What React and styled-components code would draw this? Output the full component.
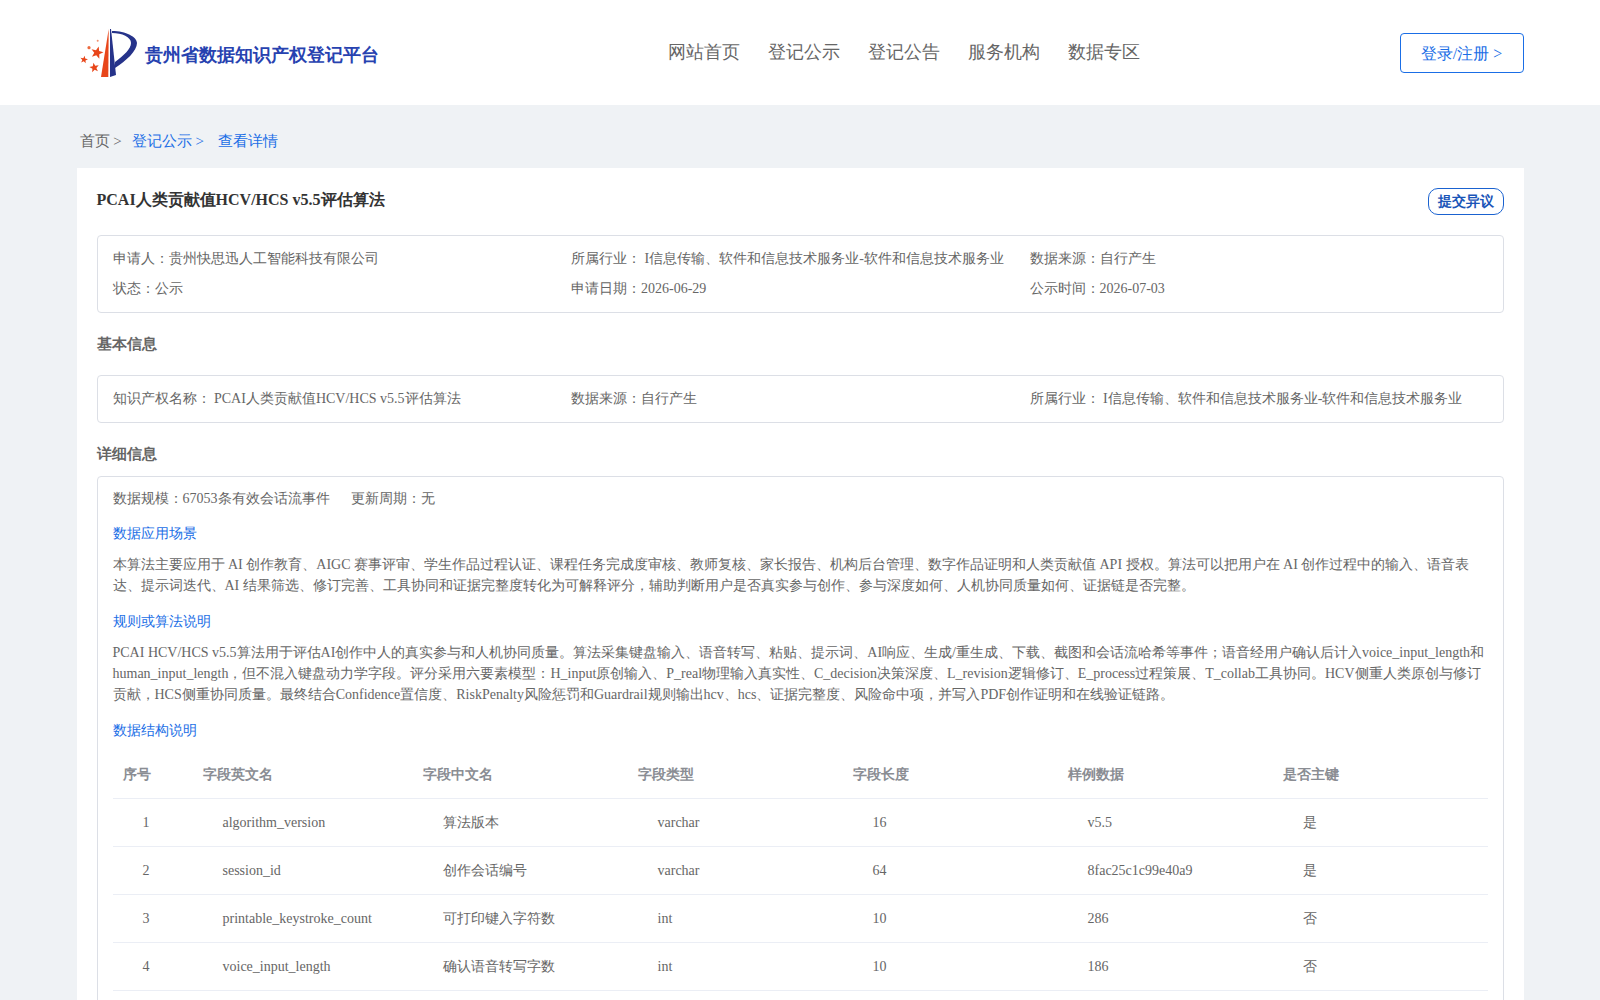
import React from 'react';
import styled, { createGlobalStyle } from 'styled-components';

const GlobalStyle = createGlobalStyle`
  html, body {
    margin: 0;
    padding: 0;
    background: #eff2f5;
    font-family: "Liberation Serif", serif;
    color: #666;
  }
  html { overflow: hidden; height: 1000px; }
  * { box-sizing: border-box; }
`;

const Header = styled.header`
  height: 105px;
  background: #fff;
  padding: 0 76px 0 80px;
  display: grid;
  grid-template-columns: 588px auto 1fr;
  align-items: center;
`;

const Brand = styled.div`
  display: flex;
  align-items: center;
  gap: 7px;
  padding-top: 3px;
`;

const BrandName = styled.span`
  padding-top: 2px;
  font-size: 18px;
  font-weight: 700;
  color: #2742b0;
`;

const Nav = styled.nav`
  display: flex;
  gap: 28px;
  padding-bottom: 2px;
`;

const NavLink = styled.a`
  font-size: 18px;
  color: #666;
  line-height: 24px;
`;

const LoginButton = styled.button`
  justify-self: end;
  width: 124px;
  height: 40px;
  padding: 3px 1px 0 0;
  background: #fff;
  border: 1px solid #1a6ee6;
  border-radius: 4px;
  color: #1a6ee6;
  font-family: inherit;
  font-size: 16px;
`;

const Main = styled.main`
  width: 1447.5px;
  margin-left: 76.5px;
`;

const Breadcrumb = styled.div`
  display: flex;
  align-items: center;
  height: 63px;
  padding: 10px 0 0 3px;
  font-size: 15px;
`;

const Crumb = styled.span`
  color: ${(p) => (p.$active ? '#1a6ee6' : '#666')};
  margin-right: ${(p) => p.$gap || 10}px;
`;

const Card = styled.section`
  background: #fff;
  padding: 20px 20px 0;
`;

const TitleRow = styled.div`
  display: flex;
  justify-content: space-between;
  align-items: flex-start;
  height: 47px;
`;

const Title = styled.h1`
  margin: 0;
  font-size: 16px;
  line-height: 24px;
  color: #333;
  font-weight: 700;
`;

const ObjectionButton = styled.button`
  width: 76px;
  height: 27px;
  padding: 0;
  background: #fff;
  border: 1px solid #1a62d0;
  border-radius: 10px;
  color: #1a55b8;
  font-family: inherit;
  font-size: 14px;
  font-weight: 700;
`;

const InfoBox = styled.div`
  border: 1px solid #dcdfe6;
  border-radius: 4px;
  padding: ${(p) => p.$padding || '12px 15px'};
`;

const InfoGrid = styled.div`
  display: grid;
  grid-template-columns: repeat(3, 1fr);
  row-gap: 8px;
  font-size: 14px;
  line-height: 22px;
`;

const SectionTitle = styled.h2`
  margin: 0;
  font-size: 15px;
  font-weight: 700;
  color: #666;
  line-height: 22px;
  padding: ${(p) => p.$padding};
`;

const MetaRow = styled.div`
  display: flex;
  gap: 21px;
  font-size: 14px;
  line-height: 21px;
`;

const SubHeading = styled.div`
  color: #1a6ee6;
  font-size: 14px;
  line-height: 21px;
  margin: ${(p) => p.$top || 15}px 0 ${(p) => p.$bottom || 10}px;
`;

const Paragraph = styled.p`
  margin: 0;
  font-size: 14px;
  line-height: 21px;
  color: #666;
`;

const Table = styled.table`
  width: 100%;
  border-collapse: collapse;
  table-layout: fixed;
  font-size: 14px;
`;

const Th = styled.th`
  width: ${(p) => p.$width || 'auto'};
  height: 48px;
  padding: 2px 0 0 10px;
  text-align: left;
  font-weight: 700;
  color: #8a8d93;
  border-bottom: 1px solid #ebeef5;
`;

const Td = styled.td`
  height: 48px;
  padding: 2px 0 0 30px;
  color: #666;
  border-bottom: 1px solid #ebeef5;
`;

const starPoints = (cx, cy, r, turn) => {
  const points = [];
  for (let i = 0; i < 10; i++) {
    const radius = i % 2 ? r * 0.42 : r;
    const angle = ((i * 36 + turn - 90) * Math.PI) / 180;
    points.push(`${(cx + radius * Math.cos(angle)).toFixed(2)},${(cy + radius * Math.sin(angle)).toFixed(2)}`);
  }
  return points.join(' ');
};

const Logo = () => (
  <svg width="58" height="50" viewBox="0 0 58 50">
    <path d="M32 2 C46 2 57 8 57 14 C57 22 46 32 35 39 L35 33 C44 26 51 20 51 14 C51 8 42 4 32 4 Z" fill="#26338a" />
    <path d="M30 0 L31 0 L36 46 L30 48 Z" fill="#26338a" />
    <path d="M28.700 0 L28.300 48 L21 48 Z" fill="#e8461a" />
    <polygon points={starPoints(17, 23.7, 6.5, 15)} fill="#e8461a" />
    <polygon points={starPoints(14.3, 38.7, 5, -10)} fill="#e8461a" />
    <polygon points={starPoints(4, 30.7, 4, 10)} fill="#e8461a" />
    <circle cx="9" cy="18.700" r="1.600" fill="#ec6a3e" />
    <circle cx="17.700" cy="11.700" r="1" fill="#f09070" />
  </svg>
);

const fields = [
  ['1', 'algorithm_version', '算法版本', 'varchar', '16', 'v5.5', '是'],
  ['2', 'session_id', '创作会话编号', 'varchar', '64', '8fac25c1c99e40a9', '是'],
  ['3', 'printable_keystroke_count', '可打印键入字符数', 'int', '10', '286', '否'],
  ['4', 'voice_input_length', '确认语音转写字数', 'int', '10', '186', '否'],
];

const headers = [
  ['序号', '80px'],
  ['字段英文名', '220px'],
  ['字段中文名', '215px'],
  ['字段类型', '215px'],
  ['字段长度', '215px'],
  ['样例数据', '215px'],
  ['是否主键'],
];

export default function App() {
  return (
    <>
      <GlobalStyle />
      <Header>
        <Brand>
          <Logo />
          <BrandName>贵州省数据知识产权登记平台</BrandName>
        </Brand>
        <Nav>
          {['网站首页', '登记公示', '登记公告', '服务机构', '数据专区'].map((item) => (
            <NavLink key={item}>{item}</NavLink>
          ))}
        </Nav>
        <LoginButton>登录/注册 &gt;</LoginButton>
      </Header>
      <Main>
        <Breadcrumb>
          <Crumb>首页 &gt;</Crumb>
          <Crumb $active $gap={14}>登记公示 &gt;</Crumb>
          <Crumb $active>查看详情</Crumb>
        </Breadcrumb>
        <Card>
          <TitleRow>
            <Title>PCAI人类贡献值HCV/HCS v5.5评估算法</Title>
            <ObjectionButton>提交异议</ObjectionButton>
          </TitleRow>
          <InfoBox>
            <InfoGrid>
              <span>申请人：贵州快思迅人工智能科技有限公司</span>
              <span>所属行业： I信息传输、软件和信息技术服务业-软件和信息技术服务业</span>
              <span>数据来源：自行产生</span>
              <span>状态：公示</span>
              <span>申请日期：2026-06-29</span>
              <span>公示时间：2026-07-03</span>
            </InfoGrid>
          </InfoBox>
          <SectionTitle $padding="20px 0 20px">基本信息</SectionTitle>
          <InfoBox>
            <InfoGrid>
              <span>知识产权名称： PCAI人类贡献值HCV/HCS v5.5评估算法</span>
              <span>数据来源：自行产生</span>
              <span>所属行业： I信息传输、软件和信息技术服务业-软件和信息技术服务业</span>
            </InfoGrid>
          </InfoBox>
          <SectionTitle $padding="20px 0 11px">详细信息</SectionTitle>
          <InfoBox $padding="11px 15px 48px">
            <MetaRow>
              <span>数据规模：67053条有效会话流事件</span>
              <span>更新周期：无</span>
            </MetaRow>
            <SubHeading $top={14}>数据应用场景</SubHeading>
            <Paragraph>本算法主要应用于 AI 创作教育、AIGC 赛事评审、学生作品过程认证、课程任务完成度审核、教师复核、家长报告、机构后台管理、数字作品证明和人类贡献值 API 授权。算法可以把用户在 AI 创作过程中的输入、语音表达、提示词迭代、AI 结果筛选、修订完善、工具协同和证据完整度转化为可解释评分，辅助判断用户是否真实参与创作、参与深度如何、人机协同质量如何、证据链是否完整。</Paragraph>
            <SubHeading>规则或算法说明</SubHeading>
            <Paragraph>PCAI HCV/HCS v5.5算法用于评估AI创作中人的真实参与和人机协同质量。算法采集键盘输入、语音转写、粘贴、提示词、AI响应、生成/重生成、下载、截图和会话流哈希等事件；语音经用户确认后计入voice_input_length和human_input_length，但不混入键盘动力学字段。评分采用六要素模型：H_input原创输入、P_real物理输入真实性、C_decision决策深度、L_revision逻辑修订、E_process过程策展、T_collab工具协同。HCV侧重人类原创与修订贡献，HCS侧重协同质量。最终结合Confidence置信度、RiskPenalty风险惩罚和Guardrail规则输出hcv、hcs、证据完整度、风险命中项，并写入PDF创作证明和在线验证链路。</Paragraph>
            <SubHeading $bottom={9}>数据结构说明</SubHeading>
            <Table>
              <thead>
                <tr>
                  {headers.map(([label, width]) => (
                    <Th key={label} $width={width}>{label}</Th>
                  ))}
                </tr>
              </thead>
              <tbody>
                {fields.map((row) => (
                  <tr key={row[0]}>
                    {row.map((cell, i) => (
                      <Td key={i}>{cell}</Td>
                    ))}
                  </tr>
                ))}
              </tbody>
            </Table>
          </InfoBox>
        </Card>
      </Main>
    </>
  );
}
